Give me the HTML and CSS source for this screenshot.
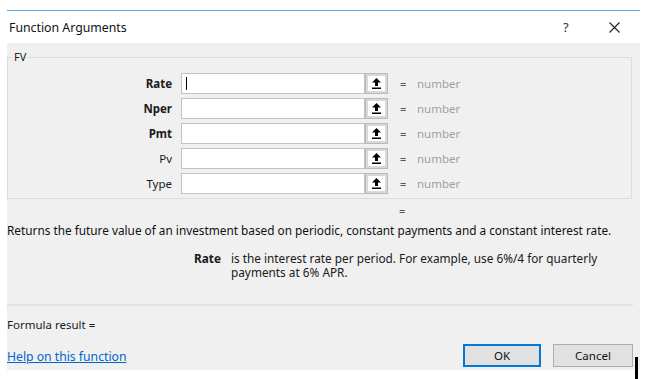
FILE: index.html
```html
<!DOCTYPE html>
<html lang="en">

<head>
    <meta charset="UTF-8">
    <title>Function Arguments</title>
    <link rel="stylesheet" href="styles.css">
</head>

<body>
    <div class="dialog">
        <div class="title-bar">
            <span class="title">Function Arguments</span>
            <span class="help">?</span>
            <span class="close">
                <svg width="11" height="11" viewBox="0 0 11 11">
                    <path d="M0.5 0.5 L10.5 10.5 M10.5 0.5 L0.5 10.5" stroke="#222" stroke-width="1.1" fill="none"/>
                </svg>
            </span>
        </div>

        <div class="dialog-body">
            <fieldset class="args">
                <legend>FV</legend>

                <div class="arg-row">
                    <label class="arg-name">Rate</label>
                    <div class="arg-input"><span class="caret"></span></div>
                    <button class="ref-btn"><svg width="9" height="11" viewBox="0 0 9 11"><path d="M4.5 0 L0 4.5 H3 V8 H6 V4.5 H9 Z M0 9.5 H9 V11 H0 Z" fill="#000"/></svg></button>
                    <span class="eq">=</span>
                    <span class="arg-value">number</span>
                </div>
                <div class="arg-row">
                    <label class="arg-name">Nper</label>
                    <div class="arg-input"></div>
                    <button class="ref-btn"><svg width="9" height="11" viewBox="0 0 9 11"><path d="M4.5 0 L0 4.5 H3 V8 H6 V4.5 H9 Z M0 9.5 H9 V11 H0 Z" fill="#000"/></svg></button>
                    <span class="eq">=</span>
                    <span class="arg-value">number</span>
                </div>
                <div class="arg-row">
                    <label class="arg-name">Pmt</label>
                    <div class="arg-input"></div>
                    <button class="ref-btn"><svg width="9" height="11" viewBox="0 0 9 11"><path d="M4.5 0 L0 4.5 H3 V8 H6 V4.5 H9 Z M0 9.5 H9 V11 H0 Z" fill="#000"/></svg></button>
                    <span class="eq">=</span>
                    <span class="arg-value">number</span>
                </div>
                <div class="arg-row">
                    <label class="arg-name optional">Pv</label>
                    <div class="arg-input"></div>
                    <button class="ref-btn"><svg width="9" height="11" viewBox="0 0 9 11"><path d="M4.5 0 L0 4.5 H3 V8 H6 V4.5 H9 Z M0 9.5 H9 V11 H0 Z" fill="#000"/></svg></button>
                    <span class="eq">=</span>
                    <span class="arg-value">number</span>
                </div>
                <div class="arg-row">
                    <label class="arg-name optional">Type</label>
                    <div class="arg-input"></div>
                    <button class="ref-btn"><svg width="9" height="11" viewBox="0 0 9 11"><path d="M4.5 0 L0 4.5 H3 V8 H6 V4.5 H9 Z M0 9.5 H9 V11 H0 Z" fill="#000"/></svg></button>
                    <span class="eq">=</span>
                    <span class="arg-value">number</span>
                </div>
            </fieldset>

            <div class="result-eq">=</div>

            <p class="summary">Returns the future value of an investment based on periodic, constant payments and a constant interest rate.</p>

            <div class="arg-help">
                <span class="help-name">Rate</span>
                <span class="help-text">is the interest rate per period. For example, use 6%/4 for quarterly payments at 6% APR.</span>
            </div>

            <div class="separator"></div>

            <p class="formula-result">Formula result =</p>

            <div class="footer">
                <a class="help-link" href="#">Help on this function</a>
                <div class="buttons">
                    <button class="btn btn-ok">OK</button>
                    <button class="btn">Cancel</button>
                </div>
            </div>
        </div>
    </div>

    <span class="cursor-bar"></span>
</body>

</html>
```

FILE: styles.css
```css
* {
    margin: 0;
    padding: 0;
    box-sizing: border-box;
    font-family: 'Noto Sans', 'Open Sans', sans-serif;
}

body {
    background: #ffffff;
    font-size: 12px;
    color: #1a1a1a;
}

.dialog {
    width: 633px;
    margin: 10px 0 0 7px;
    border-top: 1px solid #5aa9e6;
}

.title-bar {
    display: flex;
    align-items: center;
    height: 32px;
    background: #ffffff;
}

.title {
    flex: 1;
    padding-left: 2px;
    font-size: 12.3px;
    color: #111;
}

.help {
    width: 20px;
    font-size: 13px;
    color: #333;
}

.close {
    display: flex;
    width: 21px;
    margin: 0 10px 0 26px;
}

.dialog-body {
    background: #f0f0f0;
    height: 327px;
    padding-top: 6px;
}

.args {
    width: 625px;
    border: 1px solid #dcdcdc;
    padding: 8px 0 4px 0;
}

.args legend {
    margin-left: 4px;
    padding: 0 2px;
    font-size: 11px;
    line-height: 16px;
    color: #222;
}

.arg-row {
    display: flex;
    align-items: center;
    height: 21px;
    margin-bottom: 4px;
}

.arg-row:last-child {
    margin-bottom: 0;
}

.arg-name {
    width: 164px;
    text-align: right;
    font-weight: bold;
    font-size: 11.5px;
    color: #1a1a1a;
}

.arg-name.optional {
    font-weight: normal;
}

.arg-input {
    width: 184px;
    height: 21px;
    margin-left: 9px;
    background: #ffffff;
    border: 1px solid #c3c3c3;
    padding: 3px 4px;
}

.caret {
    display: block;
    width: 1px;
    height: 13px;
    background: #000;
}

.ref-btn {
    display: flex;
    align-items: center;
    justify-content: center;
    width: 23px;
    height: 21px;
    background: #ffffff;
    border: 1px solid #b9b9b9;
    box-shadow: inset 0 0 0 2px #d8d8d8;
}

.eq {
    margin-left: 12px;
    width: 17px;
    color: #555;
    font-size: 11px;
}

.arg-value {
    color: #a0a0a0;
    font-size: 11.5px;
}

.result-eq {
    margin-left: 392px;
    margin-top: 4px;
    height: 16px;
    font-size: 11px;
    color: #555;
}

.summary {
    margin-top: 3px;
    line-height: 16px;
    font-size: 11.8px;
    color: #111;
}

.arg-help {
    display: flex;
    margin-top: 13px;
    line-height: 14px;
    font-size: 11.8px;
}

.help-name {
    width: 224px;
    text-align: right;
    font-weight: bold;
    padding-right: 10px;
}

.help-text {
    width: 380px;
}

.separator {
    width: 626px;
    height: 2px;
    margin-top: 25px;
    background: #e3e3e3;
}

.formula-result {
    margin-top: 11px;
    line-height: 16px;
    font-size: 11.5px;
}

.footer {
    display: flex;
    justify-content: space-between;
    align-items: center;
    margin-top: 11px;
    width: 626px;
}

.help-link {
    color: #0066cc;
    font-size: 12.2px;
    text-decoration: underline;
    margin-top: 2px;
}

.buttons {
    display: flex;
    gap: 12px;
}

.btn {
    width: 80px;
    height: 23px;
    background: #e1e1e1;
    border: 1px solid #adadad;
    font-size: 11.5px;
    color: #111;
}

.btn-ok {
    width: 78px;
    border: 2px solid #0078d7;
}

.cursor-bar {
    position: absolute;
    left: 635px;
    top: 357px;
    width: 3px;
    height: 22px;
    background: #000;
}
```
